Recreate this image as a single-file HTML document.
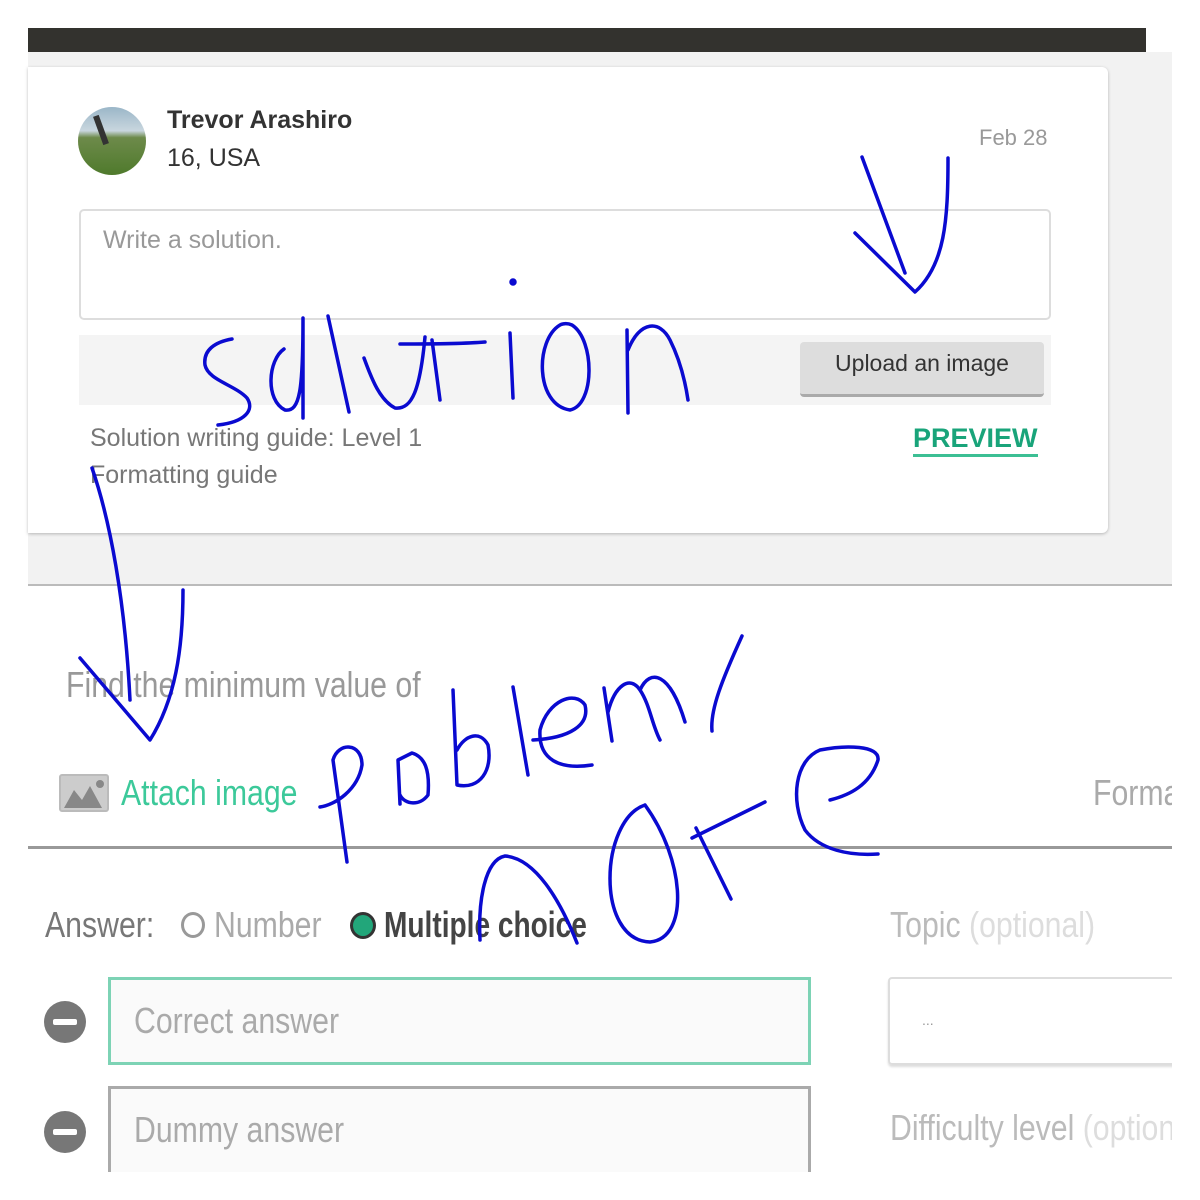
<!DOCTYPE html>
<html><head><meta charset="utf-8"><style>
*{margin:0;padding:0;box-sizing:border-box}
body{width:1200px;height:1200px;background:#fff;position:relative;overflow:hidden;font-family:"Liberation Sans",sans-serif}
.a{position:absolute}
.c{font-size:36px;transform:scaleX(.84);transform-origin:left;white-space:nowrap;line-height:40px}
</style></head><body>
<div class="a" style="left:28px;top:28px;width:1118px;height:24px;background:#33322e"></div>
<div class="a" style="left:28px;top:52px;width:1144px;height:533px;background:#f2f2f2"></div>
<div class="a" style="left:28px;top:67px;width:1080px;height:466px;background:#fff;border-radius:0 6px 6px 0;box-shadow:0 1px 3px rgba(0,0,0,.25)"></div>
<div class="a" style="left:28px;top:584px;width:1144px;height:2px;background:#bbb"></div>
<div class="a" style="left:78px;top:107px;width:68px;height:68px;border-radius:50%;background:linear-gradient(#9ab6c8 0%,#c9d6de 35%,#6d8a4a 45%,#4f7a2c 100%)"></div>
<div class="a" style="left:98px;top:115px;width:6px;height:30px;background:#333;transform:rotate(-20deg)"></div>
<div class="a" style="left:167px;top:106px;font-size:25px;font-weight:bold;color:#333">Trevor Arashiro</div>
<div class="a" style="left:167px;top:144px;font-size:25px;color:#333">16, USA</div>
<div class="a" style="left:979px;top:125px;font-size:22px;color:#999">Feb 28</div>
<div class="a" style="left:79px;top:209px;width:972px;height:111px;border:2px solid #ddd;border-radius:5px"></div>
<div class="a" style="left:103px;top:226px;font-size:25px;color:#999">Write a solution.</div>
<div class="a" style="left:79px;top:335px;width:972px;height:70px;background:#f4f4f4"></div>
<div class="a" style="left:800px;top:342px;width:244px;height:55px;background:#ddd;border-radius:4px;border-bottom:3px solid #aaa"></div>
<div class="a" style="left:800px;top:350px;width:244px;text-align:center;font-size:23px;color:#333">Upload an image</div>
<div class="a" style="left:90px;top:424px;font-size:25px;color:#777">Solution writing guide: Level 1</div>
<div class="a" style="left:90px;top:461px;font-size:25px;color:#777">Formatting guide</div>
<div class="a" style="left:913px;top:422px;font-size:27px;font-weight:bold;color:#19a47a;border-bottom:3px solid #3cbf94;line-height:32px">PREVIEW</div>

<div class="a c" style="left:66px;top:665px;color:#999">Find the minimum value of</div>
<div class="a" style="left:59px;top:774px;width:50px;height:38px;background:#ccc;border:2px solid #bbb;border-radius:3px"></div>
<svg class="a" style="left:62px;top:778px" width="44" height="32"><path d="M2 30 L12 12 L20 22 L28 8 L40 30Z" fill="#888"/><circle cx="38" cy="6" r="4" fill="#888"/></svg>
<div class="a c" style="left:121px;top:773px;color:#3cc99a">Attach image</div>
<div class="a c" style="left:1093px;top:773px;color:#aaa">Forma</div>
<div class="a" style="left:28px;top:846px;width:1144px;height:3px;background:#999"></div>
<div class="a c" style="left:45px;top:905px;color:#777">Answer:</div>
<div class="a" style="left:181px;top:912px;width:24px;height:26px;border:3px solid #999;border-radius:50%"></div>
<div class="a c" style="left:214px;top:905px;color:#aaa">Number</div>
<div class="a" style="left:350px;top:912px;width:26px;height:27px;border:3px solid #333;background:#22a67a;border-radius:50%"></div>
<div class="a c" style="left:384px;top:905px;color:#444;font-weight:bold;transform:scaleX(.78)">Multiple choice</div>
<div class="a c" style="left:890px;top:905px;color:#bbb">Topic <span style="color:#ddd">(optional)</span></div>
<div class="a" style="left:44px;top:1001px;width:42px;height:42px;border-radius:50%;background:#777"><div style="position:absolute;left:9px;top:18px;width:24px;height:6px;background:#fff;border-radius:2px"></div></div>
<div class="a" style="left:44px;top:1111px;width:42px;height:42px;border-radius:50%;background:#777"><div style="position:absolute;left:9px;top:18px;width:24px;height:6px;background:#fff;border-radius:2px"></div></div>
<div class="a" style="left:108px;top:977px;width:703px;height:88px;border:3px solid #7dd3b5;background:#fafafa"></div>
<div class="a c" style="left:134px;top:1001px;color:#aaa">Correct answer</div>
<div class="a" style="left:108px;top:1086px;width:703px;height:90px;border:3px solid #aaa;border-bottom:none;background:#fafafa"></div>
<div class="a c" style="left:134px;top:1110px;color:#aaa">Dummy answer</div>
<div class="a" style="left:888px;top:977px;width:290px;height:88px;border:2px solid #ddd;border-radius:4px;box-shadow:0 2px 2px #ddd"></div>
<div class="a" style="left:922px;top:1012px;font-size:14px;color:#999">...</div>
<div class="a c" style="left:890px;top:1108px;color:#bbb">Difficulty level <span style="color:#ddd">(optional)</span></div>
<div class="a" style="left:1172px;top:585px;width:28px;height:615px;background:#fff"></div>
<div class="a" style="left:0;top:1172px;width:1200px;height:28px;background:#fff"></div>

<svg class="a" style="left:0;top:0" width="1200" height="1200" fill="none" stroke="#0a0ad0" stroke-width="3.5" stroke-linecap="round" stroke-linejoin="round">
<path d="M232 339 C215 342 203 350 205 365 C208 380 235 385 247 398 C255 410 245 422 218 425"/>
<path d="M284 349 C268 360 265 400 285 410 C300 412 303 390 303 318 L303 418"/>
<path d="M328 316 L349 412"/>
<path d="M364 358 C372 380 380 400 395 408 C412 410 420 390 425 337"/>
<path d="M400 344 C430 344 460 344 485 342"/>
<path d="M432 340 L440 400"/>
<path d="M510 333 L513 398"/>
<path d="M560 325 C535 340 535 405 570 410 C595 405 595 340 572 325 C565 322 560 325 560 325"/>
<path d="M627 330 L628 413 M628 350 C640 320 660 320 670 340 C680 360 685 380 688 400"/>
<circle cx="513" cy="282" r="2" fill="#0a0ad0"/>
<path d="M862 157 L905 273 M948 158 C948 220 945 265 915 292 L855 233"/>
<path d="M92 468 C110 520 125 600 130 700 M183 590 C183 650 175 700 150 740 L80 658"/>
<path d="M347 862 L333 760 C338 742 362 742 362 765 C358 790 335 805 320 807"/>
<path d="M400 804 L398 760 L412 753 C425 757 430 770 428 795 C420 806 405 805 400 795"/>
<path d="M453 690 L457 785 C480 790 493 770 488 745 C480 730 465 735 457 750"/>
<path d="M513 687 L528 775"/>
<path d="M533 740 C570 738 590 725 585 705 C575 690 548 700 540 730 C538 760 560 770 592 765"/>
<path d="M604 688 L612 741 M608 712 C615 685 630 675 640 690 C650 705 652 725 660 740 M640 690 C650 668 670 672 685 722"/>
<path d="M742 636 C722 680 710 710 712 731"/>
<path d="M480 940 C478 900 485 860 505 856 C535 858 560 900 577 943"/>
<path d="M645 805 C600 820 595 940 650 942 C690 938 685 860 645 805"/>
<path d="M765 802 L692 838 M696 828 L731 899"/>
<path d="M878 854 C850 856 820 850 805 830 C790 800 795 760 820 750 C845 745 880 745 878 760 C870 785 850 795 830 800"/>
</svg>
</body></html>
